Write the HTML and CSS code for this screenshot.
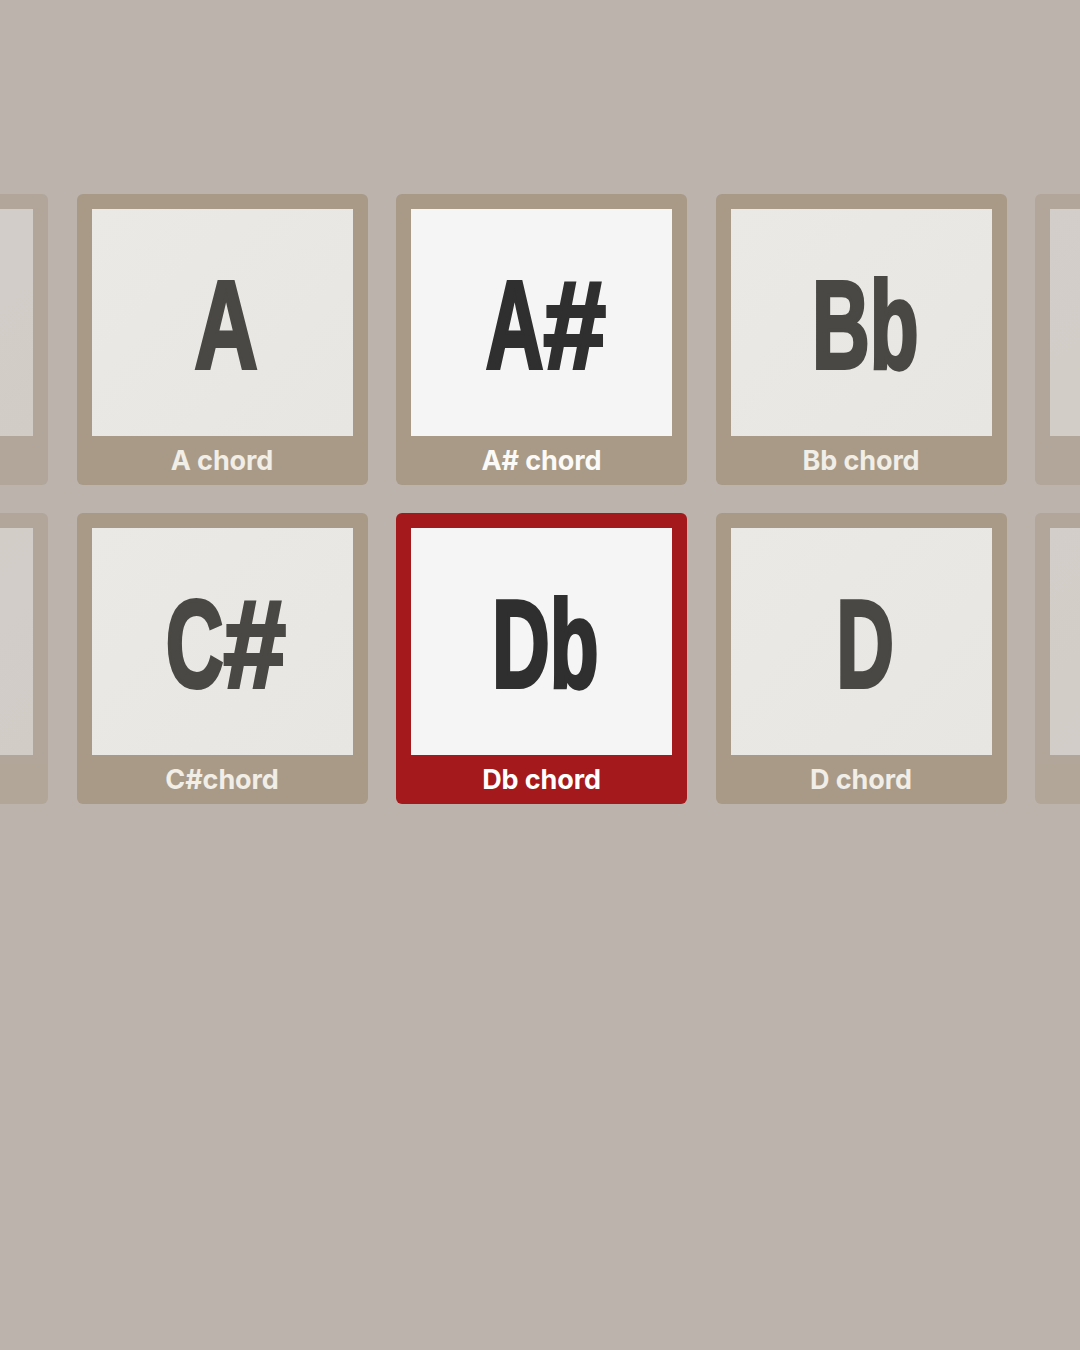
FILE: index.html
```html
<!DOCTYPE html>
<html lang="en">
<head>
    <meta charset="UTF-8">
    <meta name="viewport" content="width=device-width, initial-scale=1.0">
    <title>Chords</title>
    <link rel="stylesheet" href="styles.css">
</head>
<body>

    <div class="chord-grid">
        <div class="chord-row">
            <div class="chord-card faded">
                <div class="chord-face"></div>
                <div class="chord-label"></div>
            </div>
            <div class="chord-card">
                <div class="chord-face"><span class="chord-name wide">A</span></div>
                <div class="chord-label">A chord</div>
            </div>
            <div class="chord-card bright">
                <div class="chord-face"><span class="chord-name">A<span class="sharp">#</span></span></div>
                <div class="chord-label">A# chord</div>
            </div>
            <div class="chord-card">
                <div class="chord-face"><span class="chord-name">Bb</span></div>
                <div class="chord-label">Bb chord</div>
            </div>
            <div class="chord-card faded">
                <div class="chord-face"></div>
                <div class="chord-label"></div>
            </div>
        </div>

        <div class="chord-row">
            <div class="chord-card faded">
                <div class="chord-face"></div>
                <div class="chord-label"></div>
            </div>
            <div class="chord-card">
                <div class="chord-face"><span class="chord-name">C<span class="sharp">#</span></span></div>
                <div class="chord-label">C#chord</div>
            </div>
            <div class="chord-card selected">
                <div class="chord-face"><span class="chord-name">Db</span></div>
                <div class="chord-label">Db chord</div>
            </div>
            <div class="chord-card">
                <div class="chord-face"><span class="chord-name">D</span></div>
                <div class="chord-label">D chord</div>
            </div>
            <div class="chord-card faded">
                <div class="chord-face"></div>
                <div class="chord-label"></div>
            </div>
        </div>
    </div>

</body>
</html>
```

FILE: styles.css
```css
body {
    margin: 0;
    padding: 0;
    height: 1350px;
    overflow: hidden;
    background-color: #bcb3ad;
    font-family: Inter, "Liberation Sans", Arial, sans-serif;
}
.chord-grid {
    display: flex;
    flex-direction: column;
    gap: 28px;
    padding-top: 194px;
    padding-left: 3px;
}
.chord-row {
    display: flex;
    justify-content: center;
    gap: 28.5px;
}
.chord-card {
    flex-shrink: 0;
    width: 291px;
    height: 291px;
    box-sizing: border-box;
    padding: 15px 15px 0;
    display: flex;
    flex-direction: column;
    background-color: #a89a86;
    border-radius: 6px;
}
.chord-face {
    height: 227px;
    padding: 3px 0 0 8px;
    box-sizing: border-box;
    display: flex;
    justify-content: center;
    align-items: center;
    overflow: hidden;
    background: linear-gradient(135deg, #ebe9e5, #e8e6e2);
}
.chord-name {
    display: inline-block;
    font-family: "Liberation Sans", Arial, sans-serif;
    font-weight: bold;
    font-size: 125px;
    line-height: 1;
    color: #4a4844;
    -webkit-text-stroke: 4px currentColor;
    transform: scaleX(0.64);
    white-space: nowrap;
}
.chord-name.wide {
    transform: scaleX(0.7);
}
.sharp {
    display: inline-block;
    transform: scaleX(1.4);
    transform-origin: left center;
    margin-right: 28px;
}
.chord-label {
    flex: 1;
    display: flex;
    justify-content: center;
    align-items: center;
    font-size: 27px;
    font-weight: 700;
    letter-spacing: -0.1px;
    color: #f1ede7;
}
.chord-card.bright .chord-face,
.chord-card.selected .chord-face {
    background: #f5f5f5;
}
.chord-card.bright .chord-name,
.chord-card.selected .chord-name {
    color: #2f2f2f;
}
.chord-card.bright .chord-label {
    color: #fbfaf8;
}
.chord-card.selected {
    background-color: #a3191c;
}
.chord-card.selected .chord-label {
    color: #ffffff;
}
.chord-card.faded {
    opacity: 0.5;
}
```
